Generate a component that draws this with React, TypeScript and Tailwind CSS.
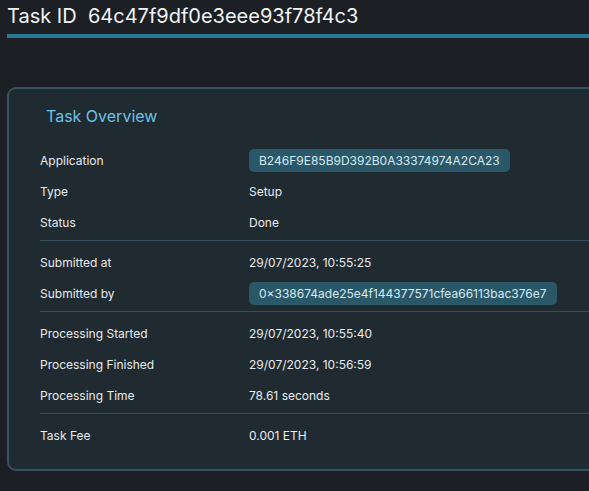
import React from 'react';

type Row = { label: string; value: string; pill?: boolean };

const groups: Row[][] = [
  [
    { label: 'Application', value: 'B246F9E85B9D392B0A33374974A2CA23', pill: true },
    { label: 'Type', value: 'Setup' },
    { label: 'Status', value: 'Done' },
  ],
  [
    { label: 'Submitted at', value: '29/07/2023, 10:55:25' },
    { label: 'Submitted by', value: '0×338674ade25e4f144377571cfea66113bac376e7', pill: true },
  ],
  [
    { label: 'Processing Started', value: '29/07/2023, 10:55:40' },
    { label: 'Processing Finished', value: '29/07/2023, 10:56:59' },
    { label: 'Processing Time', value: '78.61 seconds' },
  ],
  [{ label: 'Task Fee', value: '0.001 ETH' }],
];

export default function App() {
  return (
    <div
      className="min-h-screen w-full overflow-hidden bg-[#1c2025] text-[#e9ebed]"
      style={{ fontFamily: 'Inter, "Noto Sans", sans-serif' }}
    >
      <div className="pl-[7px]">
        <h1 className="pt-[2px] text-[20px] leading-[28px] font-normal text-[#f2f4f5] whitespace-pre">
          Task ID  64c47f9df0e3eee93f78f4c3
        </h1>
        <div className="mt-[4px] h-[4px] bg-[#2a7c94]" />
      </div>

      <div className="ml-[7px] mt-[49px] w-[640px] rounded-[9px] border-2 border-[#36525c] bg-[#1f2a31] pl-[31px] pt-[15px] pb-[18px]">
        <h2 className="ml-[6px] text-[16px] leading-[24px] text-[#6fc1e6]">Task Overview</h2>

        <div className="mt-[17px]">
          {groups.map((g, gi) => (
            <div
              key={gi}
              className={
                gi < groups.length - 1
                  ? 'border-b border-[#34505a] pb-[2px]'
                  : ''
              }
            >
              <div className={gi > 0 ? 'pt-[6px]' : ''}>
                {g.map((r) => (
                  <div key={r.label} className="flex h-[31px] items-center text-[12px]">
                    <div className="w-[209px] shrink-0">{r.label}</div>
                    {r.pill ? (
                      <span className="flex h-[23px] items-center rounded-[5px] bg-[#2b5868] px-[10px] text-[#d3eaf2]">
                        {r.value}
                      </span>
                    ) : (
                      <span>{r.value}</span>
                    )}
                  </div>
                ))}
              </div>
            </div>
          ))}
        </div>
      </div>
    </div>
  );
}
